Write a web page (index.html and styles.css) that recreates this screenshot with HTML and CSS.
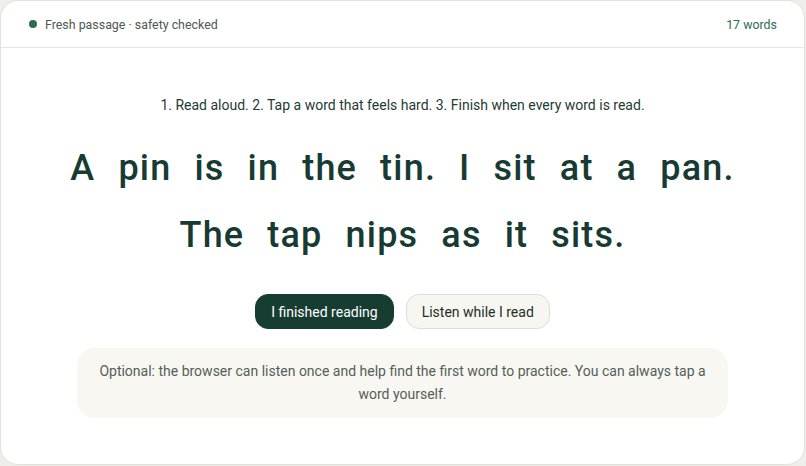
FILE: index.html
```html
<!DOCTYPE html>
<html lang="en">
<head>
<meta charset="utf-8">
<title>Reading passage</title>
<link rel="stylesheet" href="styles.css">
</head>
<body>
<div class="card">
  <header class="bar">
    <div class="status"><span class="dot"></span>Fresh passage · safety checked</div>
    <div class="count">17 words</div>
  </header>
  <main class="body">
    <p class="steps">1. Read aloud. 2. Tap a word that feels hard. 3. Finish when every word is read.</p>
    <div class="passage">
      <div class="line">
        <button class="word">A</button><button class="word">pin</button><button class="word">is</button><button class="word">in</button><button class="word">the</button><button class="word">tin.</button><button class="word">I</button><button class="word">sit</button><button class="word">at</button><button class="word">a</button><button class="word">pan.</button>
      </div>
      <div class="line">
        <button class="word">The</button><button class="word">tap</button><button class="word">nips</button><button class="word">as</button><button class="word">it</button><button class="word">sits.</button>
      </div>
    </div>
    <div class="actions">
      <button class="btn primary">I finished reading</button>
      <button class="btn secondary">Listen while I read</button>
    </div>
    <p class="note">Optional: the browser can listen once and help find the first word to practice. You can always tap a word yourself.</p>
  </main>
</div>
</body>
</html>
```
FILE: styles.css
```css
* { box-sizing: border-box; }
html, body { margin: 0; padding: 0; }
body {
  background: #efeee9;
  font-family: Roboto, "Noto Sans", sans-serif;
  width: 806px;
  height: 466px;
  overflow: hidden;
}
.card {
  width: 805px;
  height: 465px;
  background: #ffffff;
  border: 1px solid #e2e1db;
  border-radius: 18px;
  overflow: hidden;
  display: flex;
  flex-direction: column;
}
.bar {
  height: 47px;
  flex: none;
  border-bottom: 1px solid #e6e5df;
  display: flex;
  align-items: center;
  justify-content: space-between;
  padding: 0 27px 0 28px;
  font-size: 12.4px;
}
.status {
  display: flex;
  align-items: center;
  gap: 8px;
  color: #4d5854;
}
.dot {
  width: 8px;
  height: 8px;
  border-radius: 50%;
  background: #2d6a55;
}
.count { color: #2e6a56; }
.body {
  display: flex;
  flex-direction: column;
  align-items: center;
  padding: 48px 70px 0;
}
.steps {
  margin: 0;
  font-size: 14px;
  color: #1e3b33;
  line-height: 18px;
}
.passage {
  margin-top: 23px;
  display: flex;
  flex-direction: column;
  align-items: center;
  gap: 5px;
}
.line {
  display: flex;
  gap: 11px;
}
.word {
  font-family: inherit;
  font-size: 36px;
  font-weight: 500;
  letter-spacing: 1.2px;
  color: #173b33;
  background: none;
  border: none;
  padding: 8px 6px;
  line-height: 46px;
  border-radius: 10px;
  cursor: pointer;
}
.actions {
  margin-top: 28px;
  display: flex;
  gap: 12px;
}
.btn {
  font-family: inherit;
  font-size: 14px;
  height: 35px;
  padding: 0 15px;
  border-radius: 13px;
  cursor: pointer;
}
.primary {
  background: #173d33;
  color: #ffffff;
  border: 1px solid #173d33;
}
.secondary {
  background: #f7f6f1;
  color: #1e2f2a;
  border: 1px solid #dfddd5;
}
.note {
  margin: 19px 0 0;
  width: 651px;
  background: #f8f7f2;
  border-radius: 18px;
  padding: 12px 14px;
  font-size: 14px;
  line-height: 23px;
  color: #555e5a;
  text-align: center;
}
```
